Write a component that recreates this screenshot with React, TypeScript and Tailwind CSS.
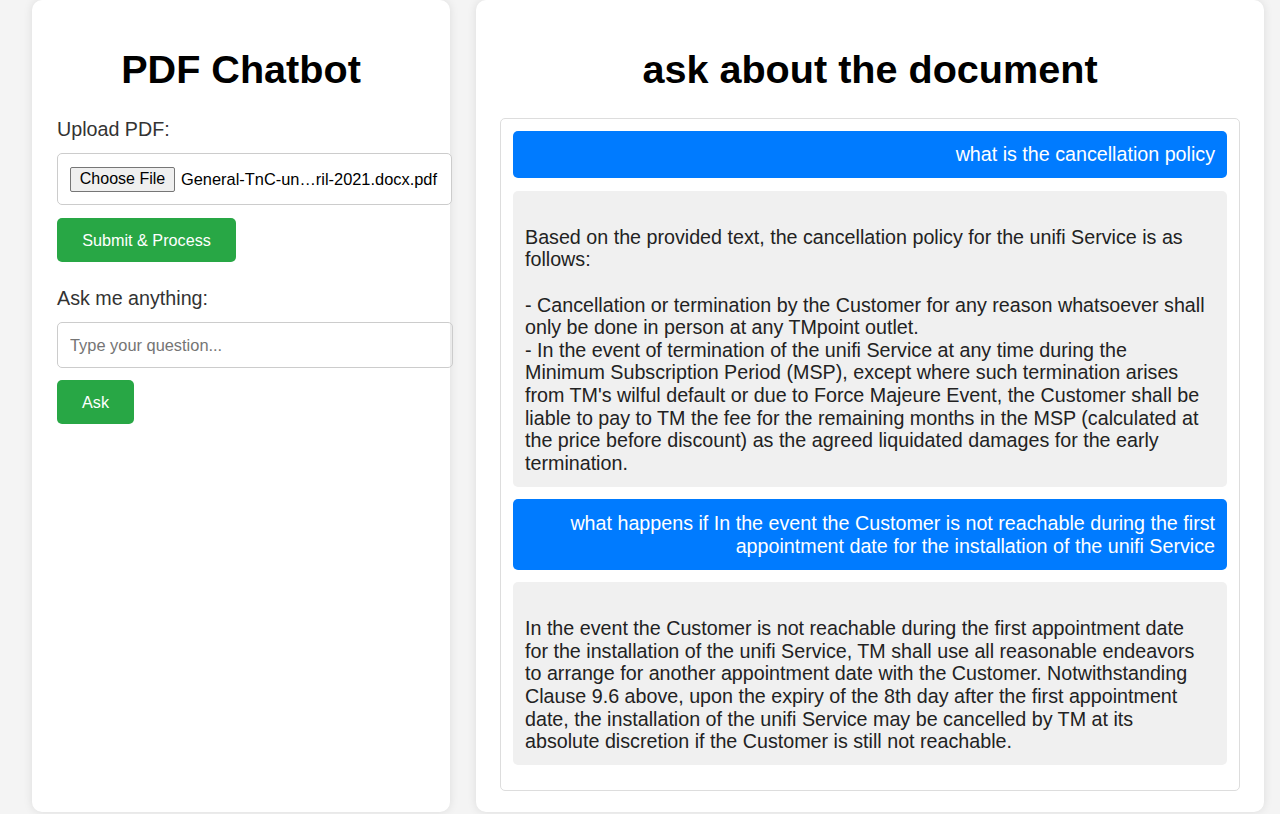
import React, { useState } from "react";

interface Message {
  role: "user" | "bot";
  text: string;
}

const messages: Message[] = [
  { role: "user", text: "what is the cancellation policy" },
  {
    role: "bot",
    text:
      "\nBased on the provided text, the cancellation policy for the unifi Service is as\nfollows:\n\n- Cancellation or termination by the Customer for any reason whatsoever shall\nonly be done in person at any TMpoint outlet.\n- In the event of termination of the unifi Service at any time during the\nMinimum Subscription Period (MSP), except where such termination arises\nfrom TM's wilful default or due to Force Majeure Event, the Customer shall be\nliable to pay to TM the fee for the remaining months in the MSP (calculated at\nthe price before discount) as the agreed liquidated damages for the early\ntermination.",
  },
  {
    role: "user",
    text: "what happens if In the event the Customer is not reachable during the first appointment date for the installation of the unifi Service",
  },
  {
    role: "bot",
    text:
      "\nIn the event the Customer is not reachable during the first appointment date\nfor the installation of the unifi Service, TM shall use all reasonable endeavors\nto arrange for another appointment date with the Customer. Notwithstanding\nClause 9.6 above, upon the expiry of the 8th day after the first appointment\ndate, the installation of the unifi Service may be cancelled by TM at its\nabsolute discretion if the Customer is still not reachable.",
  },
];

const App: React.FC = () => {
  const [question, setQuestion] = useState("");

  return (
    <div className="h-[814px] overflow-hidden bg-[#f4f4f4] font-['Liberation_Sans',Arial,sans-serif] text-[#333]">
      <div className="flex gap-[26px] pl-[32px]">
        {/* sidebar */}
        <div className="h-[812px] w-[418px] shrink-0 rounded-[10px] bg-white px-[25px] pt-[48px] shadow-[0_0_10px_rgba(0,0,0,0.1)]">
          <h1 className="text-center text-[39.6px] font-bold leading-[43.7px] text-black">
            PDF Chatbot
          </h1>
          <label className="mt-[27px] block text-[19.7px] leading-[20.7px]">
            Upload PDF:
          </label>
          <div className="mt-[14px] flex h-[52px] w-[395px] items-center rounded-[5px] border border-[#ccc] bg-white px-[12px] text-[16.4px]">
            <span className="flex h-[25px] w-[105px] items-center justify-center rounded-[2px] border border-[#767676] bg-[#efefef] text-[16px] text-black">
              Choose File
            </span>
            <span className="ml-[6px] text-black">General-TnC-un…ril-2021.docx.pdf</span>
          </div>
          <button className="mt-[13px] flex h-[44px] w-[179px] items-center justify-center rounded-[5px] bg-[#28a745] text-[16.2px] text-white">
            Submit &amp; Process
          </button>
          <label className="mt-[26px] block text-[19.7px] leading-[20.7px]">
            Ask me anything:
          </label>
          <input
            value={question}
            onChange={(e) => setQuestion(e.target.value)}
            placeholder="Type your question..."
            className="mt-[13px] block h-[46px] w-[396px] rounded-[5px] border border-[#ccc] px-[12px] text-[16.4px] outline-none placeholder:text-[#757575]"
          />
          <button className="mt-[12px] flex h-[44px] w-[77px] items-center justify-center rounded-[5px] bg-[#28a745] text-[16.2px] text-white">
            Ask
          </button>
        </div>

        {/* chat area */}
        <div className="flex h-[812px] w-[788px] shrink-0 flex-col rounded-[10px] bg-white px-[24px] pt-[48px] shadow-[0_0_10px_rgba(0,0,0,0.1)]">
          <h1 className="text-center text-[39.6px] font-bold leading-[43.7px] text-black">
            ask about the document
          </h1>
          <div className="mt-[26px] flex h-[673px] flex-col gap-[12.5px] overflow-hidden rounded-[5px] border border-[#ddd] p-[12px]">
            {messages.map((m, i) =>
              m.role === "user" ? (
                <div
                  key={i}
                  className="rounded-[5px] bg-[#007bff] px-[12px] py-[12.5px] text-right text-[19.7px] leading-[22.6px] text-white"
                >
                  {m.text}
                </div>
              ) : (
                <div
                  key={i}
                  className="whitespace-pre-wrap rounded-[5px] bg-[#f0f0f0] px-[12px] py-[12.5px] text-[19.7px] leading-[22.6px] text-[#222]"
                >
                  {m.text}
                </div>
              )
            )}
          </div>
        </div>
      </div>
    </div>
  );
};

export default App;
